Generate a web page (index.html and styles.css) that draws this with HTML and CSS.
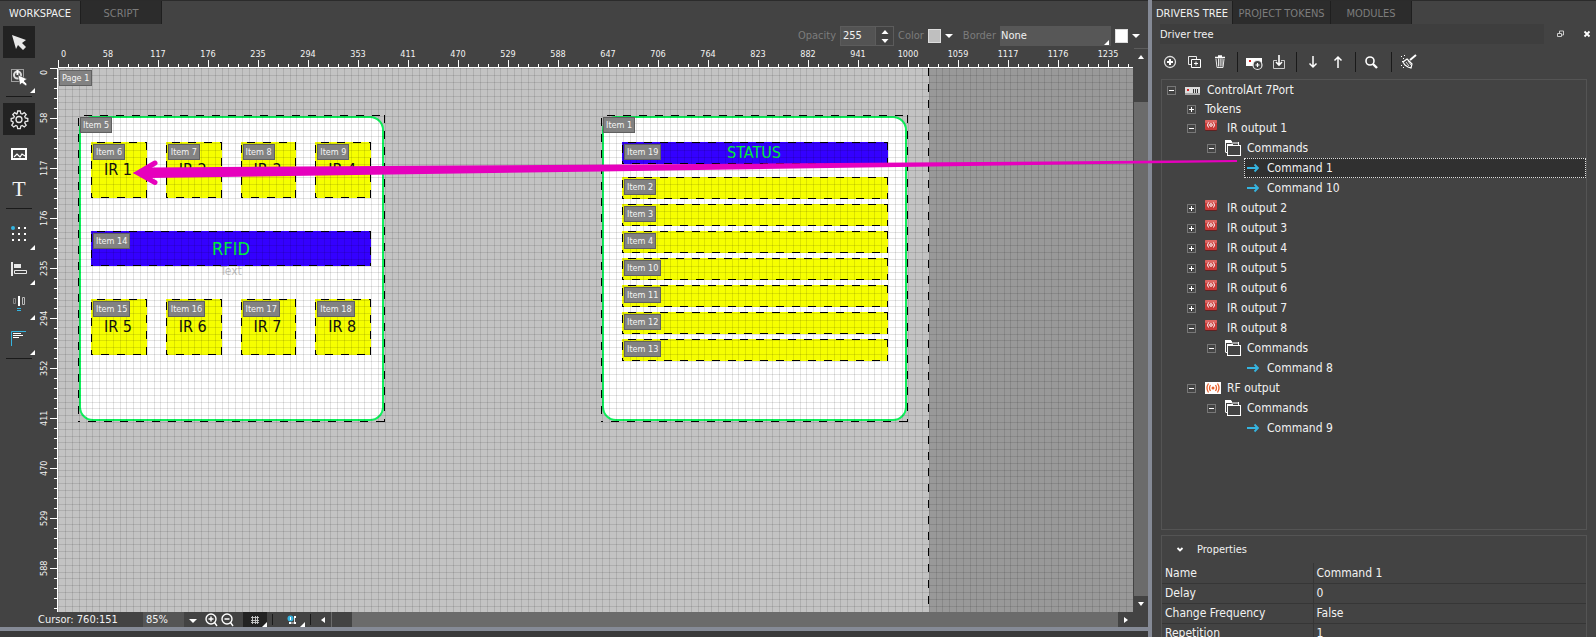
FILE: index.html
```html
<!DOCTYPE html>
<html lang="en">
<head>
<meta charset="utf-8">
<title>Workspace</title>
<link rel="stylesheet" href="styles.css">
</head>
<body>
<svg class="defs" aria-hidden="true">
  <symbol id="ir" viewBox="0 0 12 12"><rect width="12" height="11" rx="1" fill="#5f2222"/><rect width="12" height="10" rx="1" fill="#c93a38"/><rect width="12" height="3" rx="1" fill="#dc6562"/><circle cx="6" cy="5" r="1.3" fill="none" stroke="#fff"/><path d="M3.5 2.500Q1.500 5 3.500 7.500M8.500 2.500Q10.500 5 8.500 7.500" fill="none" stroke="#fff"/></symbol>
  <symbol id="folder" viewBox="0 0 16 16"><path d="M.5 12.500V1h6v2H14" fill="none" stroke="#fff"/><path d="M0 0h6v3H0zM13 2h1v3h-1z" fill="#fff"/><path d="M1 12.500h1" stroke="#fff"/><rect x="2.500" y="5.500" width="13" height="10" fill="#434343" stroke="#fff"/><path d="M2 4h6v2H2z" fill="#fff"/></symbol>
  <symbol id="go" viewBox="0 0 12 10"><path d="M0 5h11M7.500 1.500L11 5 7.500 8.500" fill="none" stroke="#35b4e0" stroke-width="1.800"/></symbol>
</svg>

<main class="work">
  <nav class="tabs">
    <button class="tab active">WORKSPACE</button><button class="tab">SCRIPT</button>
  </nav>
  <div class="work-body">
    <div class="tools">
      <button class="tool on" aria-label="Select"><svg width="32" height="32"><path d="M9 9l14 5-4 3 4 4-3 3-5-5-2 4z" fill="#e8e8e8"/></svg></button>
      <button class="tool more" aria-label="Select items"><svg width="32" height="32"><path d="M8.500 8.500h12v12h-12z" fill="none" stroke="#fff" stroke-dasharray="1 1"/><circle cx="14.500" cy="14" r="3.500" fill="none" stroke="#ddd" stroke-width="2"/><path d="M14.500 9v5" stroke="#fff" stroke-width="2"/><path d="M15 14l9 4-3 2 3 3-1 2-4-3-2 2z" fill="#fff" stroke="#434343" stroke-width=".6"/></svg></button>
      <hr class="cut">
      <button class="tool on" aria-label="Settings"><svg width="32" height="32"><path d="M14.200 10.500L14.700 8h2.600l.5 2.500 1.400.6 2.100-1.500 1.900 1.900-1.500 2.100.6 1.400 2.500.5v2.600l-2.500.5-.6 1.400 1.500 2.100-1.900 1.900-2.100-1.500-1.400.6-.5 2.500h-2.600l-.5-2.500-1.400-.6-2.100 1.500-1.900-1.900 1.500-2.100-.6-1.400L8.200 18.100v-2.600l2.500-.5.6-1.400-1.500-2.100 1.900-1.900 2.100 1.500z" fill="none" stroke="#e8e8e8" stroke-width="1.300"/><circle cx="16" cy="16.500" r="3" fill="none" stroke="#e8e8e8" stroke-width="1.300"/></svg></button>
      <button class="tool" aria-label="Image"><svg width="32" height="32"><rect x="9" y="11" width="14" height="10" fill="none" stroke="#fff" stroke-width="2"/><path d="M11 19l3-3 3 3 2-3 3 2" fill="none" stroke="#fff" stroke-width="1.200"/></svg></button>
      <button class="tool letter">T</button>
      <hr class="cut wide">
      <button class="tool more" aria-label="Snap"><svg width="32" height="32"><path d="M15 9h2v2h-2zM21 9h2v2h-2zM9 15h2v2H9zM15 15h2v2h-2zM21 15h2v2h-2zM9 21h2v2H9zM15 21h2v2h-2zM21 21h2v2h-2z" fill="#fff"/><circle cx="10" cy="10" r="2" fill="#35b4e0"/></svg></button>
      <button class="tool more" aria-label="Align"><svg width="32" height="32"><path d="M8 9h2v14H8zM11 11h7v4h-7z" fill="#e8e8e8"/><path d="M11.500 17.500h12v3h-12z" fill="none" stroke="#e8e8e8"/></svg></button>
      <button class="tool more" aria-label="Distribute"><svg width="32" height="32"><path d="M10.500 10.500h2v5h-2z" fill="none" stroke="#888"/><path d="M19.500 9.500h2v7h-2z" fill="none" stroke="#bbb"/><path d="M15 8h2v10h-2z" fill="#fff"/><path d="M14 20.500h4M14 22.500h4" stroke="#35b4e0"/></svg></button>
      <button class="tool more" aria-label="Order"><svg width="32" height="32"><path d="M8.500 23V8.500H23" fill="none" stroke="#35b4e0"/><path d="M10 10.500h8M10 12.500h10M10 14.500h6" stroke="#fff"/></svg></button>
      <hr class="cut">
    </div>
    <div class="stage">
      <div class="options">
        <label class="dim" for="opacity">Opacity</label>
        <span class="spin"><input id="opacity" value="255"><button class="spin-btn" aria-label="Step"><svg width="10" height="16"><path d="M1.500 6L5 2l3.500 4zM1.500 11L5 15l3.500-4z" fill="#fff"/></svg></button></span>
        <span class="dim">Color</span>
        <button class="swatch gray" aria-label="Fill colour"></button><i class="drop"></i>
        <label class="dim border-label" for="border">Border</label>
        <span class="pick"><select id="border"><option>None</option></select></span>
        <button class="swatch" aria-label="Border colour"></button><i class="drop"></i>
      </div>
      <div class="view">
        <div class="ruler-x"><span>0</span><span>58</span><span>117</span><span>176</span><span>235</span><span>294</span><span>353</span><span>411</span><span>470</span><span>529</span><span>588</span><span>647</span><span>706</span><span>764</span><span>823</span><span>882</span><span>941</span><span>1000</span><span>1059</span><span>1117</span><span>1176</span><span>1235</span></div>
        <div class="ruler-y"><span>0</span><span>58</span><span>117</span><span>176</span><span>235</span><span>294</span><span>352</span><span>411</span><span>470</span><span>529</span><span>588</span></div>
        <div class="canvas">
          <div class="page"><span class="tag page-tag">Page 1</span></div>
          <section class="panel left">
            <span class="tag">Item 5</span>
            <div class="keys">
              <div class="item key"><span class="tag">Item 6</span>IR 1</div>
              <div class="item key"><span class="tag">Item 7</span>IR 2</div>
              <div class="item key"><span class="tag">Item 8</span>IR 3</div>
              <div class="item key"><span class="tag">Item 9</span>IR 4</div>
            </div>
            <div class="item rfid"><span class="tag">Item 14</span>RFID<span class="ghost">Text</span></div>
            <div class="keys">
              <div class="item key"><span class="tag">Item 15</span>IR 5</div>
              <div class="item key"><span class="tag">Item 16</span>IR 6</div>
              <div class="item key"><span class="tag">Item 17</span>IR 7</div>
              <div class="item key"><span class="tag">Item 18</span>IR 8</div>
            </div>
          </section>
          <section class="panel right">
            <span class="tag">Item 1</span>
            <div class="item status"><span class="tag">Item 19</span>STATUS</div>
            <div class="item bar"><span class="tag">Item 2</span></div>
            <div class="item bar"><span class="tag">Item 3</span></div>
            <div class="item bar"><span class="tag">Item 4</span></div>
            <div class="item bar"><span class="tag">Item 10</span></div>
            <div class="item bar"><span class="tag">Item 11</span></div>
            <div class="item bar"><span class="tag">Item 12</span></div>
            <div class="item bar"><span class="tag">Item 13</span></div>
          </section>
        </div>
        <div class="scroll-y"><button class="sc up" aria-label="Up"><svg width="14" height="15"><path d="M4 10h6L7 6z" fill="#fff"/></svg></button><button class="sc" aria-label="Down"><svg width="14" height="15"><path d="M4 5h6L7 9z" fill="#fff"/></svg></button></div>
      </div>
      <div class="status-bar">
        <output class="cursor">Cursor: 760:151</output>
        <span class="zoom"><select aria-label="Zoom"><option>85%</option></select></span>
        <button class="mini" aria-label="Zoom in"><svg width="16" height="15"><circle cx="8" cy="7" r="5" fill="none" stroke="#fff" stroke-width="1.400"/><path d="M5.500 7h5M8 4.500v5M11.500 10.500L14 14" stroke="#fff" stroke-width="1.400"/></svg></button>
        <button class="mini" aria-label="Zoom out"><svg width="16" height="15"><circle cx="8" cy="7" r="5" fill="none" stroke="#fff" stroke-width="1.400"/><path d="M5.500 7h5M11.500 10.500L14 14" stroke="#fff" stroke-width="1.400"/></svg></button>
        <button class="mini grid-btn more" aria-label="Grid"><svg width="24" height="15"><path d="M9.500 4v8M12.500 4v8M14.500 4v8M8 5.500h8M8 8.500h8M8 10.500h8" stroke="#ccc" stroke-width=".9"/></svg></button>
        <i class="bar-cut"></i>
        <button class="mini snap-btn more" aria-label="Snap options"><svg width="26" height="15"><circle cx="11.500" cy="6.500" r="3" fill="#35b4e0"/><path d="M11.500 5v3" stroke="#fff"/><path d="M12 11h5M15.500 6v4" stroke="#ddd"/><path d="M10 10h2v2h-2zM15 10h2v2h-2zM15 4h2v2h-2z" fill="#fff"/></svg></button>
        <i class="bar-cut"></i>
        <div class="scroll-x"><button class="sc" aria-label="Left"><svg width="15" height="15"><path d="M9 5v6L5 8z" fill="#fff"/></svg></button><i class="thumb"></i><button class="sc end" aria-label="Right"><svg width="15" height="15"><path d="M6 5v6l4-3z" fill="#fff"/></svg></button></div>
      </div>
    </div>
  </div>
</main>

<aside class="side">
  <nav class="tabs">
    <button class="tab active">DRIVERS TREE</button><button class="tab tokens">PROJECT TOKENS</button><button class="tab">MODULES</button>
  </nav>
  <header class="side-head"><h2>Driver tree</h2>
    <button aria-label="Float"><svg width="8" height="8"><path d="M2.500 3V1h4v4h-2M.5 3.500h4v3h-4z" fill="none" stroke="#ccc"/></svg></button>
    <button aria-label="Close"><svg width="8" height="8"><path d="M1.500 1.500l5 5M6.500 1.500l-5 5" stroke="#fff" stroke-width="1.800"/></svg></button>
  </header>
  <div class="side-tools">
    <button aria-label="Add"><svg width="18" height="18"><circle cx="9" cy="9" r="5.500" fill="none" stroke="#ddd" stroke-width="1.300"/><path d="M6 9h6M9 6v6" stroke="#fff" stroke-width="2"/></svg></button>
    <button aria-label="Duplicate"><svg width="18" height="18"><path d="M5.500 11.500h-3v-8h8v3" fill="none" stroke="#e8e8e8"/><path d="M5.500 6.500h9v8h-9z" fill="none" stroke="#fff"/><path d="M8 10.500h4M10 8.500v4" stroke="#fff"/></svg></button>
    <button aria-label="Delete"><svg width="18" height="18"><path d="M4 4.500h10M7 3h4" stroke="#fff" stroke-width="1.500"/><path d="M5 6l1 8.500h6L13 6M7.500 5.500v8M9.200 5.500v8M11 5.500v8" fill="none" stroke="#e8e8e8"/></svg></button>
    <i class="bar-cut"></i>
    <button aria-label="Add device"><svg width="18" height="18"><path d="M1 5h16v8H1z" fill="#fff"/><path d="M4 7h2v2H4z" fill="#d22"/><circle cx="12.500" cy="12" r="4.500" fill="#434343" stroke="#e8e8e8" stroke-width="1.200"/><path d="M10.500 12h4M12.500 10v4" stroke="#fff" stroke-width="1.200"/></svg></button>
    <button aria-label="Import"><svg width="18" height="18"><path d="M7 7.500H3.500v8h11v-8H11" fill="none" stroke="#ccc"/><path d="M9 2v10M6 9l3 3 3-3" fill="none" stroke="#fff" stroke-width="1.600"/></svg></button>
    <i class="bar-cut"></i>
    <button aria-label="Move down"><svg width="18" height="18"><path d="M9 3v11M5.500 10.500L9 14l3.500-3.500" fill="none" stroke="#fff" stroke-width="1.500"/></svg></button>
    <button aria-label="Move up"><svg width="18" height="18"><path d="M9 15V4M5.500 7.500L9 4l3.500 3.500" fill="none" stroke="#fff" stroke-width="1.500"/></svg></button>
    <i class="bar-cut"></i>
    <button aria-label="Search"><svg width="18" height="18"><circle cx="7" cy="8" r="4" fill="none" stroke="#fff" stroke-width="1.600"/><path d="M10 11l4 4" stroke="#fff" stroke-width="2.400"/></svg></button>
    <i class="bar-cut late"></i>
    <button aria-label="Clean"><svg width="18" height="18"><path d="M17 2l-6 5" stroke="#fff" stroke-width="2"/><path d="M8 6l5 5-1 4-3-1-3-2-2-3z" fill="none" stroke="#fff" stroke-width="1.200"/><path d="M7 9l3 4M9 8l3 4" stroke="#ddd"/><path d="M2 3h1v1H2zM4 5h1v1H4zM3 8h1v1H3zM5 2h1v1H5zM2 12h1v1H2zM4 14h1v1H4z" fill="#fff"/></svg></button>
  </div>

  <div class="tree" role="tree">
    <div class="row root"><button class="exp" aria-label="Collapse"></button><svg class="ico" width="16" height="8"><path d="M0 0h15v8H0z" fill="#ddd"/><path d="M0 6h15v2H0z" fill="#aaa"/><path d="M2 2h2v2H2z" fill="#d22"/><path d="M8.500 2v4M10.500 2v4M12.500 2v4" stroke="#333"/></svg>ControlArt 7Port</div>
    <div class="row l1 second"><button class="exp plus" aria-label="Expand"></button><span>Tokens</span></div>
    <div class="row l1"><button class="exp" aria-label="Collapse"></button><svg class="ico up" width="12" height="12"><use href="#ir"/></svg>IR output 1</div>
    <div class="row l2"><button class="exp" aria-label="Collapse"></button><svg class="ico" width="16" height="16"><use href="#folder"/></svg>Commands</div>
    <div class="row cmd picked"><svg class="ico" width="12" height="10"><use href="#go"/></svg>Command 1</div>
    <div class="row cmd"><svg class="ico" width="12" height="10"><use href="#go"/></svg>Command 10</div>
    <div class="row l1"><button class="exp plus" aria-label="Expand"></button><svg class="ico up" width="12" height="12"><use href="#ir"/></svg>IR output 2</div>
    <div class="row l1"><button class="exp plus" aria-label="Expand"></button><svg class="ico up" width="12" height="12"><use href="#ir"/></svg>IR output 3</div>
    <div class="row l1"><button class="exp plus" aria-label="Expand"></button><svg class="ico up" width="12" height="12"><use href="#ir"/></svg>IR output 4</div>
    <div class="row l1"><button class="exp plus" aria-label="Expand"></button><svg class="ico up" width="12" height="12"><use href="#ir"/></svg>IR output 5</div>
    <div class="row l1"><button class="exp plus" aria-label="Expand"></button><svg class="ico up" width="12" height="12"><use href="#ir"/></svg>IR output 6</div>
    <div class="row l1"><button class="exp plus" aria-label="Expand"></button><svg class="ico up" width="12" height="12"><use href="#ir"/></svg>IR output 7</div>
    <div class="row l1"><button class="exp" aria-label="Collapse"></button><svg class="ico up" width="12" height="12"><use href="#ir"/></svg>IR output 8</div>
    <div class="row l2"><button class="exp" aria-label="Collapse"></button><svg class="ico" width="16" height="16"><use href="#folder"/></svg>Commands</div>
    <div class="row cmd"><svg class="ico" width="12" height="10"><use href="#go"/></svg>Command 8</div>
    <div class="row l1"><button class="exp" aria-label="Collapse"></button><svg class="ico" width="16" height="12"><rect width="16" height="12" fill="#fff"/><path d="M3.500 1.500Q.5 6 3.500 10.500M5.500 3Q3.500 6 5.500 9M10.500 3Q12.500 6 10.500 9M12.500 1.500Q15.500 6 12.500 10.500" fill="none" stroke="#e8602c" stroke-width="1.300"/><circle cx="8" cy="6" r="1.500" fill="#e8602c"/></svg>RF output</div>
    <div class="row l2"><button class="exp" aria-label="Collapse"></button><svg class="ico" width="16" height="16"><use href="#folder"/></svg>Commands</div>
    <div class="row cmd"><svg class="ico" width="12" height="10"><use href="#go"/></svg>Command 9</div>
  </div>

  <div class="props">
    <button class="props-head"><svg width="8" height="6"><path d="M1.500 1L4 3.500 6.500 1" fill="none" stroke="#fff" stroke-width="1.800"/></svg>Properties</button>
    <table>
      <tr><th>Name</th><td>Command 1</td></tr>
      <tr><th>Delay</th><td>0</td></tr>
      <tr><th>Change Frequency</th><td>False</td></tr>
      <tr><th>Repetition</th><td>1</td></tr>
    </table>
  </div>
</aside>

<svg class="link" aria-hidden="true"><path d="M1237 160L700 164 150 167.500V178L600 171.500 1237 162z" fill="#e600bd"/><path d="M155 163L138 173 155 182.500" fill="none" stroke="#e600bd" stroke-width="5" stroke-linecap="round"/><path d="M133 173l18-8v16z" fill="#e600bd"/></svg>
</body>
</html>
```
FILE: styles.css
```css
* { box-sizing: border-box; }
body {
  margin: 0;
  height: 100vh;
  display: flex;
  position: relative;
  overflow: hidden;
  background: #434343;
  color: #f2f2f2;
  font: 11px/14px "DejaVu Sans Condensed", "DejaVu Sans", sans-serif;
}
button, input, select {
  font: inherit;
  color: inherit;
  background: none;
  border: 0;
  padding: 0;
  margin: 0;
  border-radius: 0;
  appearance: none;
}
svg { display: block; flex: none; }
.defs { position: absolute; width: 0; height: 0; }

.work { flex: 1; min-width: 0; display: flex; flex-direction: column; }
.tabs { display: flex; height: 24px; flex: none; border-top: 1px solid #2b2b2b; }
.tab {
  min-width: 81px;
  padding: 2px 3px 0;
  background: #2c2c2c;
  color: #7c7c7c;
  border-right: 1px solid #1f1f1f;
  white-space: nowrap;
}
.tab.active { background: #434343; color: #f2f2f2; }
.tab.tokens { min-width: 98px; }

.work-body { flex: 1; min-height: 0; display: flex; border-bottom: 6px solid #3a3a3a; }
.tools {
  width: 38px;
  flex: none;
  display: flex;
  flex-direction: column;
  gap: 3px;
  padding: 2px 3px;
  border-bottom: 4px solid #858a96;
}
.tool { width: 32px; height: 32px; flex: none; }
.tool.on { background: #222; }
.tool.letter { font: 22px/32px "Liberation Serif", serif; }
.more { position: relative; }
.more::after {
  content: "";
  position: absolute;
  right: 0;
  bottom: 0;
  border-left: 5px solid transparent;
  border-bottom: 5px solid #fff;
}
.cut { width: 26px; height: 1px; margin: 0 3px 3px; border: 0; background: #1a1a1a; flex: none; }
.cut.wide { margin-bottom: 6px; }

.stage { flex: 1; min-width: 0; display: flex; flex-direction: column; border-bottom: 4px solid #858a96; }
.options {
  height: 22px;
  flex: none;
  display: flex;
  align-items: center;
  justify-content: flex-end;
  gap: 4px;
  padding: 1px 8px 0 0;
}
.dim { color: #7c7c7c; }
.spin { display: flex; width: 54px; height: 20px; border: 1px solid #5c5c5c; }
.spin input { width: 35px; padding-left: 2px; background: #535353; border-right: 1px solid #5c5c5c; }
.spin-btn { flex: 1; display: grid; place-items: center; }
.swatch { width: 13px; height: 14px; background: #fff; border: 1px solid #ddd; }
.swatch.gray { background: #bfbfbf; }
.drop { border: 4px solid transparent; border-top-color: #fff; border-bottom: 0; }
.border-label { margin-left: 6px; }
.pick { position: relative; width: 111px; height: 20px; background: #575757; }
.pick select { width: 100%; height: 20px; padding-left: 1px; }
.pick::after {
  content: "";
  position: absolute;
  right: 2px;
  bottom: 1px;
  border-left: 5px solid transparent;
  border-bottom: 5px solid #fff;
}

.view {
  flex: 1;
  min-height: 0;
  display: grid;
  grid-template: 22px 1fr / 20px 1fr 15px;
}
.ruler-x, .ruler-y { font-size: 9px; line-height: 12px; display: flex; overflow: hidden; }
.ruler-x {
  grid-area: 1 / 2;
  padding-top: 2px;
  background:
    linear-gradient(#fff, #fff) 0 100% / 100% 1px no-repeat,
    linear-gradient(90deg, #fff 1px, transparent 1px) 0 100% / 50px 8px repeat-x,
    linear-gradient(90deg, #fff 1px, transparent 1px) 0 100% / 10px 4px repeat-x;
}
.ruler-x span { width: 50px; flex: none; text-align: center; }
.ruler-x span:first-child { width: 25px; text-align: left; padding-left: 3px; }
.ruler-y {
  grid-area: 2 / 1;
  flex-direction: column;
  background:
    linear-gradient(#fff, #fff) 100% 0 / 1px 100% no-repeat,
    linear-gradient(#fff 1px, transparent 1px) 100% 0 / 8px 50px repeat-y,
    linear-gradient(#fff 1px, transparent 1px) 100% 0 / 4px 10px repeat-y;
}
.ruler-y span {
  height: 50px;
  width: 12px;
  flex: none;
  writing-mode: vertical-rl;
  transform: rotate(180deg);
  text-align: center;
}
.ruler-y span:first-child { height: 25px; text-align: right; padding-bottom: 2px; }

.canvas { grid-area: 2 / 2; position: relative; overflow: hidden; background: #999; }
.canvas::after {
  content: "";
  position: absolute;
  inset: 0;
  --g: rgba(0, 0, 0, .11);
  background:
    repeating-linear-gradient(90deg, var(--g) 0 1px, transparent 1px 7px, var(--g) 7px 8px, transparent 8px 14px, var(--g) 14px 15px, transparent 15px 21px, var(--g) 21px 22px, transparent 22px 28px, var(--g) 28px 29px, transparent 29px 34px),
    repeating-linear-gradient(var(--g) 0 1px, transparent 1px 7px, var(--g) 7px 8px, transparent 8px 14px, var(--g) 14px 15px, transparent 15px 21px, var(--g) 21px 22px, transparent 22px 28px, var(--g) 28px 29px, transparent 29px 34px);
}
.page {
  position: absolute;
  inset: 0 auto 0 0;
  width: 871px;
  background:
    repeating-linear-gradient(#000 0 8px, transparent 8px 16px) 100% 0 / 1px 100% no-repeat,
    #c3c3c3;
}
.tag {
  position: absolute;
  left: 2px;
  top: 2px;
  height: 16px;
  padding: 0 2px;
  border: 1px solid #606060;
  background: #828282;
  color: #f4f4f4;
  font-size: 9px;
  line-height: 14px;
  white-space: nowrap;
  z-index: 1;
}
.page-tag { left: 1px; }

/* dashed selection outline drawn on each edge */
.panel::after, .item::after {
  content: "";
  position: absolute;
  inset: 0;
  background:
    repeating-linear-gradient(90deg, transparent 0 6px, #000 6px 14px, transparent 14px 16px) 0 0 / 100% 1px no-repeat,
    repeating-linear-gradient(90deg, #000 0 2px, transparent 2px 10px, #000 10px 16px) 0 100% / 100% 1px no-repeat,
    repeating-linear-gradient(transparent 0 3px, #000 3px 11px, transparent 11px 16px) 0 0 / 1px 100% no-repeat,
    repeating-linear-gradient(#000 0 8px, transparent 8px 16px) 100% 0 / 1px 100% no-repeat;
}
.panel { position: absolute; top: 47px; width: 307px; height: 307px; }
.panel::before {
  content: "";
  position: absolute;
  inset: 1px;
  border: 2px solid #10f05c;
  border-radius: 14px;
  background: #fff;
}
.panel.left { left: 20px; padding: 27px 14px 0 13px; display: flex; flex-direction: column; gap: 33px; }
.panel.right { left: 543px; padding: 27px 20px 0 21px; display: flex; flex-direction: column; gap: 5px; }
.keys { display: flex; gap: 19px; }
.item { position: relative; display: grid; place-items: center; }
.key { flex: 1; height: 56px; padding-right: 2px; background: #f6ff00; color: #111; font-size: 16px; line-height: 20px; }
.rfid, .status { background: #3400ff; color: #00f03c; }
.rfid { height: 35px; font-size: 18px; line-height: 22px; }
.status { height: 22px; padding-right: 2px; font-size: 16px; line-height: 20px; margin-bottom: 8px; }
.bar { height: 22px; background: #f6ff00; }
.ghost {
  position: absolute;
  top: 100%;
  color: #c4c4c4;
  font-size: 12px;
  line-height: 10px;
}

.scroll-y {
  grid-area: 1 / 3 / 3 / 4;
  margin: 2px 0 0 1px;
  display: flex;
  flex-direction: column;
  justify-content: space-between;
  background: #6b6b6b;
}
.sc { background: #434343; width: 15px; height: 16px; }
.sc.up { height: 54px; border-top: 1px solid #5c5c5c; }
.sc.up svg { margin-bottom: 38px; }

.status-bar { height: 15px; flex: none; display: flex; align-items: center; }
.cursor { width: 105px; padding-top: 1px; }
.zoom { position: relative; width: 60px; background: linear-gradient(90deg, #555 41px, #434343 41px); }
.zoom select { width: 41px; height: 15px; padding: 1px 0 0 3px; display: block; }
.zoom::after {
  content: "";
  position: absolute;
  right: 6px;
  top: 7px;
  border: 4px solid transparent;
  border-top-color: #fff;
  border-bottom: 0;
}
.mini { height: 15px; }
.grid-btn { background: #222; margin-left: 8px; }
.snap-btn { margin-left: 1px; }
.bar-cut { width: 1px; height: 11px; background: #1a1a1a; margin: 0 5px; flex: none; }
.scroll-x { flex: 1; display: flex; background: #6b6b6b; margin-right: 15px; }
.scroll-x .sc { height: 15px; }
.thumb { width: 21px; background: #434343; border-left: 1px solid #6b6b6b; }
.end { margin-left: auto; }

.side {
  width: 448px;
  flex: none;
  border-left: 4px solid #858a96;
  display: flex;
  flex-direction: column;
}
.side-head { display: flex; align-items: center; height: 20px; flex: none; padding: 0 5px 0 8px; gap: 18px; }
.side-head h2 { flex: 1; margin: 0 -5px 0 0; padding-top: 1px; height: 20px; font: inherit; line-height: 20px; background: #3e3e3e; }
.side-tools { display: flex; align-items: center; height: 35px; flex: none; padding: 1px 9px 0; gap: 7px; }
.side-tools .bar-cut { height: 20px; margin: 0 1px; }
.side-tools .bar-cut + button { margin-left: -1px; }
.side-tools .late { margin-left: 3px; }
.tree {
  height: 451px;
  flex: none;
  margin: 0 9px;
  border: 1px solid #545454;
  padding-top: 1px;
  font-size: 12px;
  line-height: 19px;
}
.row { display: flex; align-items: center; height: 20px; padding-left: 5px; white-space: nowrap; }
.row.root { height: 19px; }
.row.second { height: 18px; }
.row.l1 { padding-left: 25px; }
.row.l2 { padding-left: 45px; }
.row.cmd { margin-left: 82px; padding-left: 3px; }
.picked { background: #303030; border: 1px dotted #ddd; }
.row.cmd.picked { padding-left: 2px; }
.exp {
  width: 9px;
  height: 9px;
  margin-right: 9px;
  flex: none;
  border: 1px solid #777;
  background: linear-gradient(#fff, #fff) center / 5px 1px no-repeat;
}
.exp.plus {
  background:
    linear-gradient(#fff, #fff) center / 5px 1px no-repeat,
    linear-gradient(#fff, #fff) center / 1px 5px no-repeat;
}
.ico { margin-right: 6px; }
.ico.up { margin-right: 10px; margin-bottom: 5px; }
.cmd .ico { margin-right: 8px; }

.props { margin: 5px 9px 0; flex: 1; min-height: 0; overflow: hidden; border: 1px solid #545454; border-bottom: 0; }
.props-head { display: flex; align-items: center; gap: 13px; height: 27px; padding: 0 14px; }
table { width: 100%; border-collapse: collapse; font-size: 12px; table-layout: fixed; }
th, td { height: 20px; padding: 0 3px; font-weight: normal; text-align: left; border-bottom: 1px solid #363636; line-height: 18px; }
th { width: 151px; border-right: 1px solid #363636; }

.link { position: absolute; left: 0; top: 0; width: 100%; height: 100%; pointer-events: none; z-index: 5; }
```
